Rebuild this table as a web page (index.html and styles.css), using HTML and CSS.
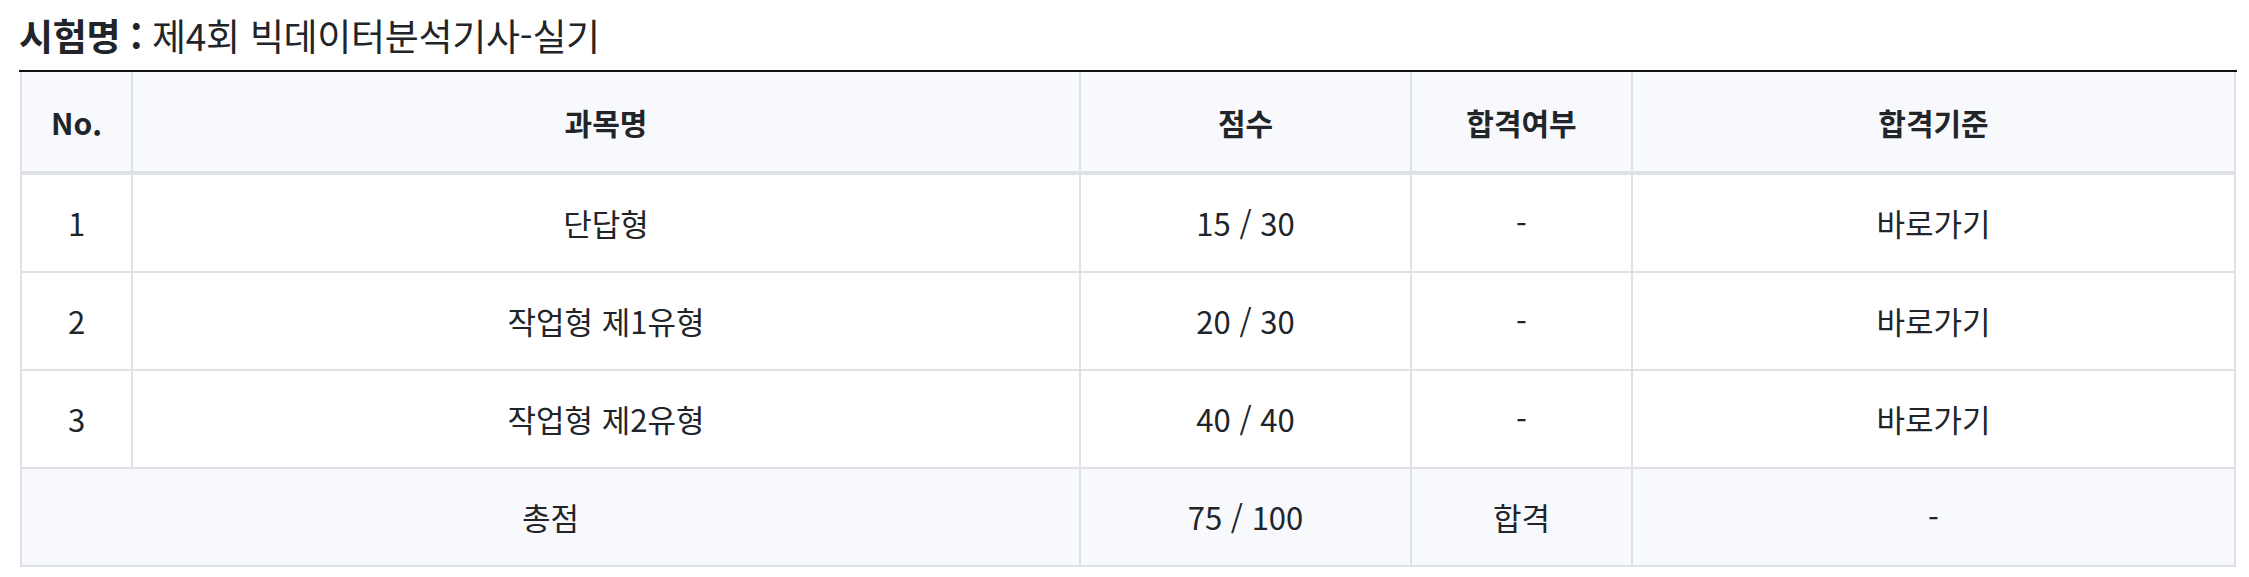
FILE: index.html
```html
<!DOCTYPE html>
<html lang="ko">
<head>
<meta charset="utf-8">
<title>시험 결과</title>
<link rel="stylesheet" href="styles.css">
</head>
<body>
<div class="page">
  <h2 class="exam-title"><span class="label">시험명 :</span> 제4회 빅데이터분석기사-실기</h2>
  <div class="table-wrap">
    <table class="result">
      <colgroup>
        <col class="c-no">
        <col class="c-subject">
        <col class="c-score">
        <col class="c-pass">
        <col class="c-criteria">
      </colgroup>
      <thead>
        <tr>
          <th>No.</th>
          <th>과목명</th>
          <th>점수</th>
          <th>합격여부</th>
          <th>합격기준</th>
        </tr>
      </thead>
      <tbody>
        <tr>
          <td>1</td>
          <td>단답형</td>
          <td>15 / 30</td>
          <td>-</td>
          <td>바로가기</td>
        </tr>
        <tr>
          <td>2</td>
          <td>작업형 제1유형</td>
          <td>20 / 30</td>
          <td>-</td>
          <td>바로가기</td>
        </tr>
        <tr>
          <td>3</td>
          <td>작업형 제2유형</td>
          <td>40 / 40</td>
          <td>-</td>
          <td>바로가기</td>
        </tr>
        <tr class="total">
          <td colspan="2">총점</td>
          <td>75 / 100</td>
          <td>합격</td>
          <td>-</td>
        </tr>
      </tbody>
    </table>
  </div>
</div>
</body>
</html>
```
FILE: styles.css
```css
html, body {
  margin: 0;
  padding: 0;
  background: #ffffff;
}
body {
  font-family: "Noto Sans CJK KR", "Noto Sans", sans-serif;
  color: #212529;
}
.page {
  padding: 0 12px 0 19px;
}
.exam-title {
  margin: 0;
  height: 70px;
  font-size: 37px;
  font-weight: 400;
  line-height: 70px;
  letter-spacing: -0.3px;
  color: #212529;
}
.exam-title .label {
  font-weight: 700;
}
.table-wrap {
  border-top: 2px solid #111111;
  padding: 0 1px;
}
.result {
  width: 100%;
  border-collapse: collapse;
  table-layout: fixed;
  font-size: 31px;
  text-align: center;
}
.c-no { width: 111px; }
.c-subject { width: 948px; }
.c-score { width: 331px; }
.c-pass { width: 221px; }
.result th,
.result td {
  border: 2px solid #dee2e6;
  padding: 0;
  vertical-align: middle;
}
.result thead tr:first-child th {
  border-top: none;
}
.result th {
  height: 99px;
  background: #f8f9fc;
  font-size: 30px;
  font-weight: 700;
  border-bottom: 4px solid #dee2e6;
}
.result td {
  height: 94px;
  padding-bottom: 2px;
  font-weight: 400;
}
.result tr.total td {
  background: #f8f9fc;
}
```
